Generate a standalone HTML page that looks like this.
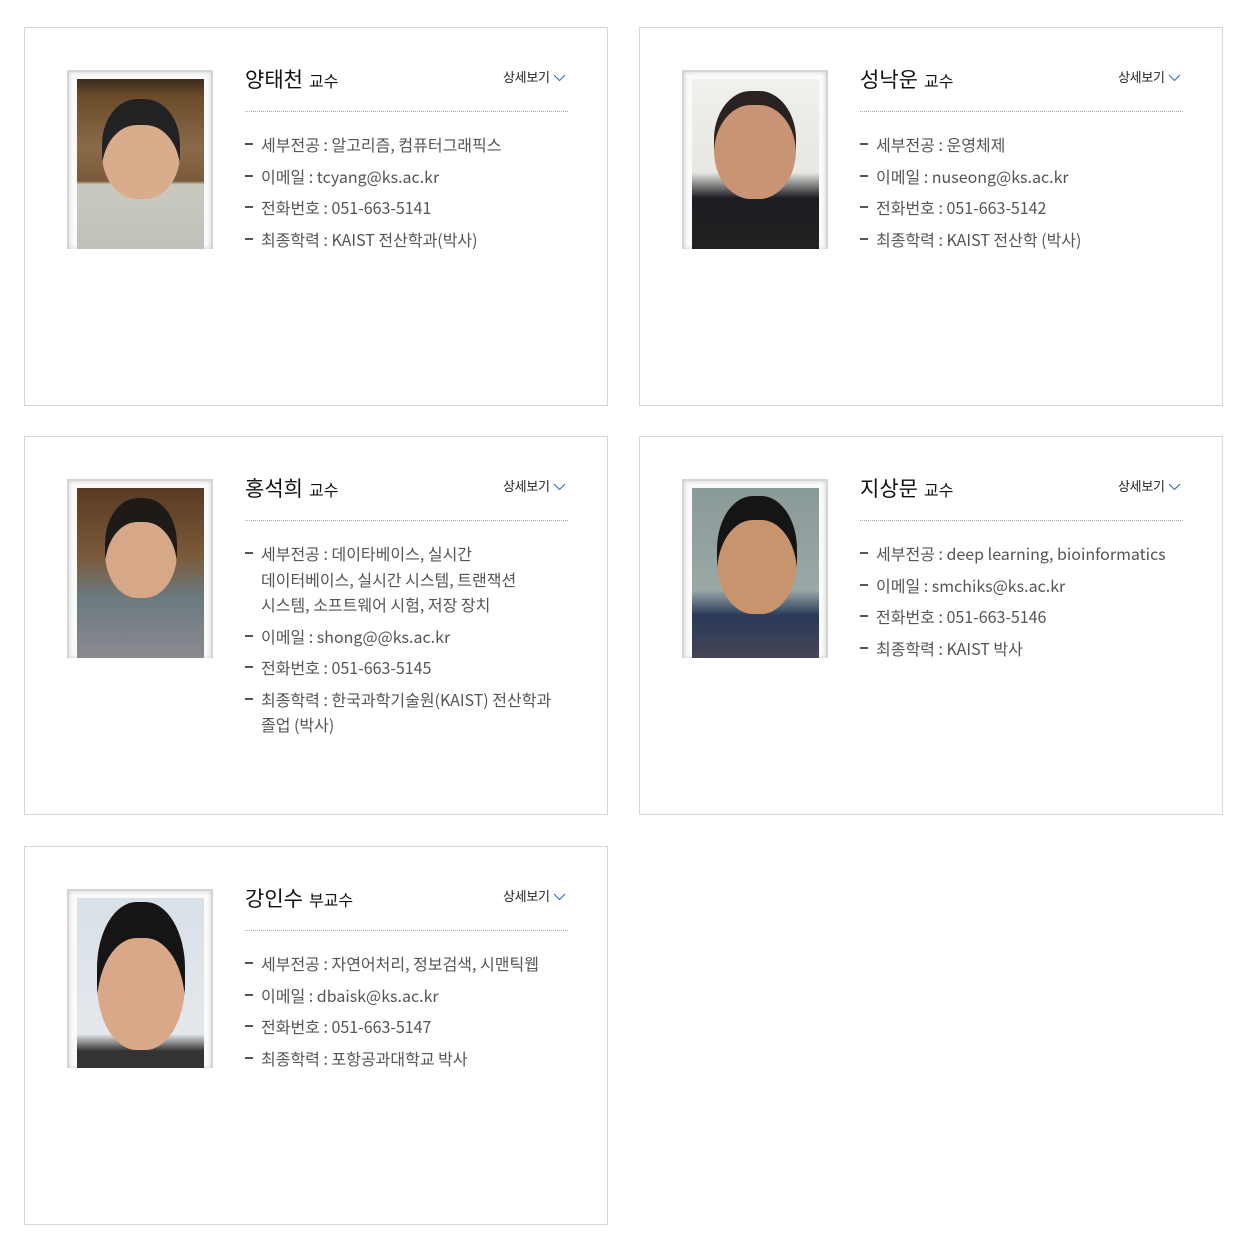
<!DOCTYPE html>
<html><head><meta charset="utf-8">
<style>
*{margin:0;padding:0;box-sizing:border-box}
body{width:1246px;height:1243px;background:#fff;font-family:"Noto Sans CJK KR","Liberation Sans",sans-serif;position:relative;overflow:hidden}
.card{position:absolute;width:584px;height:379px;border:1px solid #d6d6d6;background:#fff}
.frame{position:absolute;left:42px;top:42px;width:146px;height:179px;border:2px solid #d4d4d4;border-bottom:none;box-shadow:inset 0 0 4px #ccc;background:#fafafa}
.photo{position:absolute;left:8px;top:7px;width:127px;height:170px;overflow:hidden}
.name{position:absolute;left:220px;top:36px;font-size:21px;color:#111;white-space:nowrap;line-height:30px}
.name small{font-size:16px;margin-left:6px}
.more{position:absolute;left:478px;top:40px;font-size:13px;color:#222;white-space:nowrap;line-height:18px;letter-spacing:-0.3px}
.more svg{vertical-align:middle;margin-left:3px}
.line{position:absolute;left:220px;top:83px;width:323px;border-top:1px dotted #aaa}
ul{position:absolute;left:220px;top:104px;width:340px;list-style:none;font-size:16px;color:#555;line-height:25.5px;letter-spacing:0}
li{position:relative;padding-left:16px;margin-bottom:6px;white-space:nowrap}
li:before{content:"";position:absolute;left:0;top:11px;width:8px;height:2px;background:#555}
</style></head><body>

<div class="card" style="left:24px;top:27px">
 <div class="frame"><div class="photo" style="background:linear-gradient(#3b2a1e 0,#6b4a2a 10%,#8a6a48 40%,#7a5a3a 60%,#c9c9c0 62%,#bfc2b8 100%)"><div style="position:absolute;left:25px;top:20px;width:78px;height:100px;border-radius:45%;background:#d9ac8c;box-shadow:inset 0 26px 0 #222"></div></div></div>
 <div class="name">양태천<small>교수</small></div>
 <div class="more">상세보기<svg width="13" height="8"><path d="M1 1l5.5 5.5 5.5-5.5" stroke="#2a6ab8" fill="none"/></svg></div>
 <div class="line"></div>
 <ul><li>세부전공 : 알고리즘, 컴퓨터그래픽스</li><li>이메일 : tcyang@ks.ac.kr</li><li>전화번호 : 051-663-5141</li><li>최종학력 : KAIST 전산학과(박사)</li></ul>
</div>

<div class="card" style="left:639px;top:27px">
 <div class="frame"><div class="photo" style="background:linear-gradient(#f0f0ec 0,#e8e8e2 55%,#1c1c22 70%,#222 100%)"><div style="position:absolute;left:22px;top:12px;width:82px;height:108px;border-radius:45%;background:#c99476;box-shadow:inset 0 14px 0 #2a2220"></div></div></div>
 <div class="name">성낙운<small>교수</small></div>
 <div class="more">상세보기<svg width="13" height="8"><path d="M1 1l5.5 5.5 5.5-5.5" stroke="#2a6ab8" fill="none"/></svg></div>
 <div class="line"></div>
 <ul><li>세부전공 : 운영체제</li><li>이메일 : nuseong@ks.ac.kr</li><li>전화번호 : 051-663-5142</li><li>최종학력 : KAIST 전산학 (박사)</li></ul>
</div>

<div class="card" style="left:24px;top:436px">
 <div class="frame"><div class="photo" style="background:linear-gradient(#5a3a22 0,#7a5a3a 40%,#6a7a80 65%,#8a8a90 100%)"><div style="position:absolute;left:28px;top:10px;width:72px;height:100px;border-radius:45%;background:#d6a888;box-shadow:inset 0 24px 0 #1e1a18"></div></div></div>
 <div class="name">홍석희<small>교수</small></div>
 <div class="more">상세보기<svg width="13" height="8"><path d="M1 1l5.5 5.5 5.5-5.5" stroke="#2a6ab8" fill="none"/></svg></div>
 <div class="line"></div>
 <ul><li>세부전공 : 데이타베이스, 실시간<br>데이터베이스, 실시간 시스템, 트랜잭션<br>시스템, 소프트웨어 시험, 저장 장치</li><li>이메일 : shong@@ks.ac.kr</li><li>전화번호 : 051-663-5145</li><li>최종학력 : 한국과학기술원(KAIST) 전산학과<br>졸업 (박사)</li></ul>
</div>

<div class="card" style="left:639px;top:436px">
 <div class="frame"><div class="photo" style="background:linear-gradient(#8a9a98 0,#9aa8a6 60%,#2a3a5a 75%,#445 100%)"><div style="position:absolute;left:25px;top:8px;width:80px;height:118px;border-radius:45%;background:#c8946e;box-shadow:inset 0 24px 0 #151515"></div></div></div>
 <div class="name">지상문<small>교수</small></div>
 <div class="more">상세보기<svg width="13" height="8"><path d="M1 1l5.5 5.5 5.5-5.5" stroke="#2a6ab8" fill="none"/></svg></div>
 <div class="line"></div>
 <ul><li>세부전공 : deep learning, bioinformatics</li><li>이메일 : smchiks@ks.ac.kr</li><li>전화번호 : 051-663-5146</li><li>최종학력 : KAIST 박사</li></ul>
</div>

<div class="card" style="left:24px;top:846px">
 <div class="frame"><div class="photo" style="background:linear-gradient(#d8e0e8 0,#e4e8ec 80%,#333 90%,#333 100%)"><div style="position:absolute;left:20px;top:4px;width:88px;height:148px;border-radius:45%;background:#d8a888;box-shadow:inset 0 36px 0 #151515"></div></div></div>
 <div class="name">강인수<small>부교수</small></div>
 <div class="more">상세보기<svg width="13" height="8"><path d="M1 1l5.5 5.5 5.5-5.5" stroke="#2a6ab8" fill="none"/></svg></div>
 <div class="line"></div>
 <ul><li>세부전공 : 자연어처리, 정보검색, 시맨틱웹</li><li>이메일 : dbaisk@ks.ac.kr</li><li>전화번호 : 051-663-5147</li><li>최종학력 : 포항공과대학교 박사</li></ul>
</div>

</body></html>
